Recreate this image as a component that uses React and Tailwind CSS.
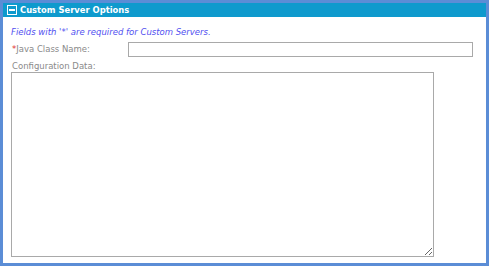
export default function App() {
  return (
    <div className="w-[489px] h-[266px] bg-white border-[3px] border-[#5b8dd6] flex flex-col font-['DejaVu_Sans',sans-serif]">
      <div className="h-[14px] bg-[#0e9acd] flex items-center pl-[4px] gap-[3px]">
        <div className="w-[10px] h-[10px] border border-white flex items-center justify-center">
          <div className="w-[6px] h-[2px] bg-white" />
        </div>
        <span className="text-white font-bold text-[8.4px] leading-none">Custom Server Options</span>
      </div>
      <div className="flex flex-col pl-[8px] pt-[11px]">
        <p className="italic text-[#5050f0] text-[8.5px] leading-none">Fields with '*' are required for Custom Servers.</p>
        <div className="flex items-center mt-[5px]">
          <label className="w-[117px] text-[#8a8a8a] text-[8.5px] pl-[1px] pt-[1px]">
            <span className="text-[#e03030]">*</span>Java Class Name:
          </label>
          <input className="w-[345px] h-[15px] border border-[#a9a9a9] outline-none" />
        </div>
        <label className="text-[#8a8a8a] text-[8.5px] mt-[5px] pl-[1px] leading-none">Configuration Data:</label>
        <textarea className="mt-[2px] w-[423px] h-[185px] border border-[#a9a9a9] outline-none" />
      </div>
    </div>
  );
}
